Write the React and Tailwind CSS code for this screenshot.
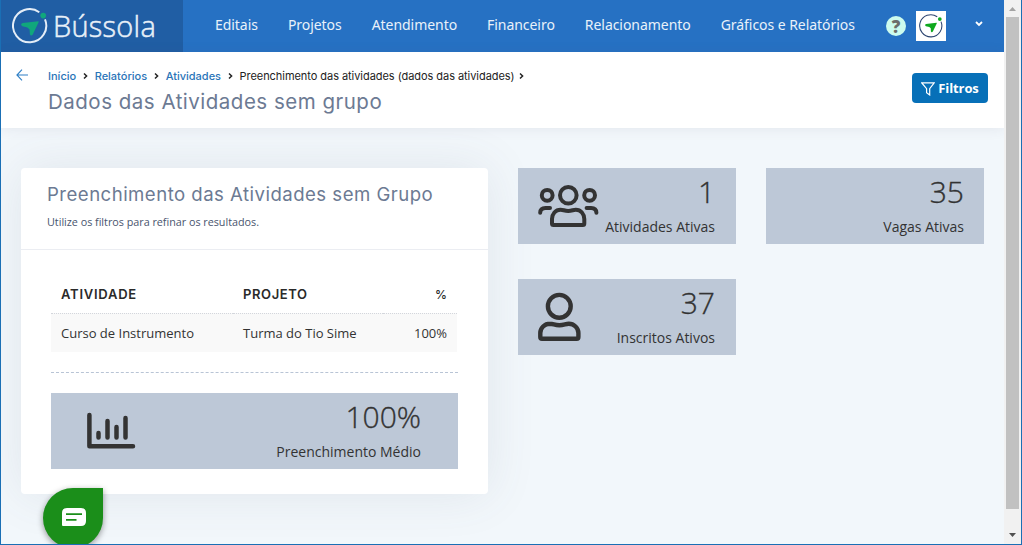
import clsx from "clsx";

const menu = [
  "Editais",
  "Projetos",
  "Atendimento",
  "Financeiro",
  "Relacionamento",
  "Gráficos e Relatórios",
];

const crumbs = ["Início", "Relatórios", "Atividades"];

function CompassMark({ className, ring, arrow, ringWidth = 2 }) {
  return (
    <svg viewBox="0 0 36 36" className={className} fill="none">
      <path
        d="M27.3 4.2A16.6 16.6 0 1 0 33 11.4"
        stroke={ring}
        strokeWidth={ringWidth}
      />
      <circle cx="31.2" cy="7.6" r="2.8" fill={arrow} />
      <path
        d="M26.2 13.2Q27 13.2 26.6 14.2L20.8 26.4Q19 28.6 17.9 26.4L17.6 21.4L15.4 19.4L10.4 18.2Q7.6 16.4 10.6 15Z"
        fill={arrow}
      />
    </svg>
  );
}

function Chevron({ className }) {
  return (
    <svg viewBox="0 0 5 8" className={className} fill="none">
      <path d="M1 1.5L3.6 4L1 6.5" stroke="#222" strokeWidth="1.5" />
    </svg>
  );
}

function GroupIcon() {
  return (
    <svg
      viewBox="0 0 61 44"
      className="h-11 w-[61px]"
      fill="none"
      stroke="#333"
      strokeWidth="4"
      strokeLinecap="round"
    >
      <circle cx="30.3" cy="11.3" r="8.3" />
      <circle cx="9.2" cy="11.3" r="5.4" />
      <circle cx="51.6" cy="11.3" r="5.4" />
      <path d="M22.5 25.7C17.5 25.7 14 30 14 35V39.5Q14 41 15.5 41H44.8Q46.3 41 46.3 39.5V35C46.3 30 42.8 25.7 37.8 25.7C35 25.7 34 27 30.2 27C26.4 27 25.3 25.7 22.5 25.7Z" />
      <path d="M2.2 28.8C2.3 25.5 4.5 24 7.5 24H12" />
      <path d="M58.4 28.8C58.3 25.5 56.1 24 53.1 24H48.6" />
    </svg>
  );
}

function UserIcon() {
  return (
    <svg
      viewBox="0 0 43 50"
      className="h-[50px] w-[43px]"
      fill="none"
      stroke="#333"
      strokeWidth="4.4"
    >
      <circle cx="21.3" cy="14.3" r="11.4" />
      <path d="M12 31.8C6.5 31.8 2.3 36 2.3 41V45Q2.3 46.8 4 46.8H38.7Q40.4 46.8 40.4 45V41C40.4 36 36 31.8 30.8 31.8C27.5 31.8 26 33.3 21.3 33.3C16.7 33.3 15.3 31.8 12 31.8Z" />
    </svg>
  );
}

function ChartIcon() {
  return (
    <svg
      viewBox="0 0 49 37"
      className="h-[37px] w-[49px]"
      fill="none"
      stroke="#333"
      strokeWidth="4.5"
      strokeLinecap="round"
      strokeLinejoin="round"
    >
      <path d="M2.4 3V34.2H46" />
      <path d="M11.5 21V25.5M20.5 9V25.5M29.5 15V25.5M38.5 6V25.5" />
    </svg>
  );
}

function StatCard({ value, label, icon, className }) {
  return (
    <div
      className={clsx(
        "flex h-[76px] items-start justify-between bg-[#bdc8d7] text-[#333] font-['Open_Sans',sans-serif]",
        className
      )}
    >
      <div>{icon}</div>
      <div className="text-right whitespace-nowrap">
        <p className="mt-1 text-[30px] leading-10 font-light [-webkit-text-stroke:0.35px_#333]">{value}</p>
        <p className="mt-1 text-sm leading-[22px]">{label}</p>
      </div>
    </div>
  );
}

function Header() {
  return (
    <header className="flex h-[52px] shrink-0 bg-[#2671c3]">
      <div className="flex w-[182px] shrink-0 items-center bg-[#205ea4] pl-[11px]">
        <CompassMark className="size-9" ring="#e4edf7" arrow="#10a77c" ringWidth={2} />
        <span className="mb-0.5 ml-[5px] font-['Open_Sans',sans-serif] text-[29px] leading-none font-light tracking-[0.25px] text-[#e8f0f8] [-webkit-text-stroke:0.5px_#e8f0f8]">
          Bússola
        </span>
      </div>
      <nav className="flex flex-1 items-center gap-[30px] pb-1 pl-8 font-['Noto_Sans',sans-serif] text-[14px] tracking-[-0.05px] whitespace-nowrap text-[#e9f1fa]">
        {menu.map((item) => (
          <a key={item}>{item}</a>
        ))}
      </nav>
      <div className="flex shrink-0 items-center pr-[21px]">
        <span className="flex size-5 items-center justify-center rounded-full bg-[#ccfbee] font-['Open_Sans',sans-serif] text-[17px] leading-none font-extrabold text-[#6b6d6b]">
          ?
        </span>
        <span className="ml-2.5 flex size-[30px] items-center justify-center bg-white">
          <CompassMark className="size-6" ring="#2c4470" arrow="#0fa81e" ringWidth={1.6} />
        </span>
        <svg viewBox="0 0 8 6" className="mb-1 ml-[29px] h-1.5 w-2" fill="none">
          <path d="M1 1L4 4L7 1" stroke="#fff" strokeWidth="1.8" />
        </svg>
      </div>
    </header>
  );
}

function TitleBar() {
  return (
    <div className="relative z-10 flex h-[76px] shrink-0 bg-white shadow-[0_1px_12px_rgba(82,63,105,0.09)]">
      <svg viewBox="0 0 12 12" className="mt-[17px] ml-[15px] h-3 w-3" fill="none">
        <path d="M6 .7L.9 6L6 11.3M.9 6H12" stroke="#2e7fc6" strokeWidth="1.1" />
      </svg>
      <div className="ml-5 flex-1 font-['Inter',sans-serif] whitespace-nowrap">
        <div className="mt-4 flex h-4 items-center text-[11px] font-medium text-[#2a74b8]">
          {crumbs.map((c) => (
            <span key={c} className="flex items-center">
              {c}
              <Chevron className="mr-[7px] ml-[6.5px] h-2 w-[5px]" />
            </span>
          ))}
          <span className="font-normal tracking-[-0.05px] text-[#222]">
            Preenchimento das atividades (dados das atividades)
          </span>
          <Chevron className="ml-1 h-2 w-[5px]" />
        </div>
        <h1 className="mt-1.5 text-[20.5px] leading-6 tracking-[0.5px] text-[#6c7a93]">
          Dados das Atividades sem grupo
        </h1>
      </div>
      <button className="mt-[21px] mr-4 flex h-[30px] w-[76px] items-center justify-center gap-[3px] rounded bg-[#0770b8] pt-px font-['Open_Sans',sans-serif] text-[13px] font-bold tracking-[-0.1px] text-white">
        <svg viewBox="0 0 14 14" className="size-3.5" fill="none" stroke="#fff" strokeWidth="1.2">
          <path d="M.8 .9H13.2L8.7 6.6V13L5.6 10.8V6.6Z" />
        </svg>
        Filtros
      </button>
    </div>
  );
}

function GroupCard() {
  return (
    <section className="h-[326px] w-[467px] shrink-0 rounded bg-white shadow-[0_0_50px_rgba(82,90,105,0.11)]">
      <div className="h-[82px] border-b border-[#ebedf2] pl-[26px] whitespace-nowrap">
        <h2 className="pt-[14px] font-['Inter',sans-serif] text-[18.6px] leading-6 tracking-[0.47px] text-[#6c7a93]">
          Preenchimento das Atividades sem Grupo
        </h2>
        <p className="mt-2 font-['Open_Sans',sans-serif] text-[10.8px] leading-4 tracking-[-0.02px] text-[#48546e]">
          Utilize os filtros para refinar os resultados.
        </p>
      </div>
      <div className="px-[30px] pt-[26px]">
        <table className="w-[406px] table-fixed font-['Open_Sans',sans-serif] text-[13px] text-[#333]">
          <thead>
            <tr className="h-[37px] border-b border-dotted border-[#d3d6dc] text-left font-['Inter',sans-serif] text-[#2a2a2a]">
              <th className="w-[182px] pt-px pl-2.5 font-semibold tracking-[0.75px]">ATIVIDADE</th>
              <th className="w-[150px] pt-px pl-2.5 font-semibold tracking-[0.6px]">PROJETO</th>
              <th className="pt-px pr-2.5 text-right text-xs font-medium">%</th>
            </tr>
          </thead>
          <tbody>
            <tr className="h-[39px] bg-[#f9f9f9]">
              <td className="pt-0.5 pl-2.5">Curso de Instrumento</td>
              <td className="pt-0.5 pl-2.5">Turma do Tio Sime</td>
              <td className="pt-0.5 pr-2.5 text-right">100%</td>
            </tr>
          </tbody>
        </table>
        <div className="mt-5 border-t border-dashed border-[#b8c4d5]" />
        <StatCard
          value="100%"
          label="Preenchimento Médio"
          className="mt-5 pr-[37px] pl-9"
          icon={
            <div className="mt-[19px]">
              <ChartIcon />
            </div>
          }
        />
      </div>
    </section>
  );
}

function Scrollbar() {
  return (
    <div className="flex w-[17px] shrink-0 flex-col items-center bg-[#f1f1f1]">
      <svg viewBox="0 0 17 17" className="size-[17px]">
        <path d="M5 11L8.5 7L12 11Z" fill="#a3a3a3" />
      </svg>
      <div className="h-[492px] w-[13px] bg-[#c1c1c1]" />
      <svg viewBox="0 0 17 17" className="mt-[17px] size-[17px]">
        <path d="M5 7L8.5 11L12 7Z" fill="#505050" />
      </svg>
    </div>
  );
}

function ChatButton() {
  return (
    <button className="absolute top-[488px] left-[42px] z-20 flex size-[60px] items-center justify-center rounded-full rounded-tr-md bg-[#1b8e1a] pb-0.5 pl-0.5 shadow-[0_2px_6px_rgba(0,0,0,0.4)]">
      <svg viewBox="0 0 24 18" className="h-[18px] w-6">
        <path d="M5 0H19Q24 0 24 5V13Q24 18 19 18H1Q0 18 0 17V5Q0 0 5 0Z" fill="#fff" />
        <path d="M4 6.2H20M4 11.8H14.5" stroke="#1b8e1a" strokeWidth="1.8" />
      </svg>
    </button>
  );
}

export default function App() {
  return (
    <div className="flex h-[545px] w-[1022px] overflow-hidden border-x border-b border-[#1a6fb5] bg-[#f2f7fb]">
      <div className="relative flex min-w-0 flex-1 flex-col overflow-hidden">
        <Header />
        <TitleBar />
        <main className="flex gap-[30px] pt-10 pl-5">
          <GroupCard />
          <div className="relative grid h-fit grid-cols-[218px_218px] gap-x-[30px] gap-y-[35px]">
            <StatCard
              value="1"
              label="Atividades Ativas"
              className="pr-[21px] pl-5"
              icon={
                <div className="mt-4 -mr-4">
                  <GroupIcon />
                </div>
              }
            />
            <StatCard value="35" label="Vagas Ativas" className="pr-5 pl-5" />
            <StatCard
              value="37"
              label="Inscritos Ativos"
              className="pr-[21px] pl-5"
              icon={
                <div className="mt-[13px]">
                  <UserIcon />
                </div>
              }
            />
          </div>
        </main>
        <ChatButton />
      </div>
      <Scrollbar />
    </div>
  );
}
